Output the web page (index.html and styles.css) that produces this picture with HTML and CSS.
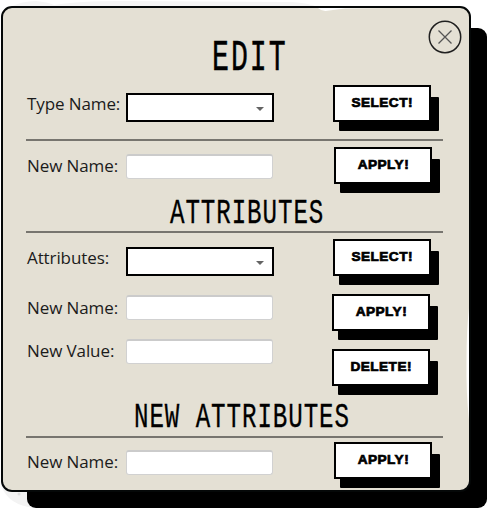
FILE: index.html
```html
<!DOCTYPE html>
<html lang="en">
<head>
<meta charset="utf-8">
<title>Edit</title>
<link rel="stylesheet" href="styles.css">
</head>
<body>
<svg class="smudge" width="489" height="511" viewBox="0 0 489 511" aria-hidden="true">
  <path d="M10 7Q22 1 36 1Q48 2 54 5Q80 1 120 1L292 2Q308 3 318 7Z" fill="#f5f5f5"/>
  <path d="M1 485Q8 506 36 508L36 490Z" fill="#f3f3f3"/>
  <circle cx="19" cy="494" r="1.5" fill="#ddd"/>
</svg>
<main class="panel">
  <svg class="wear" width="469" height="486" viewBox="1 6 469 486" aria-hidden="true">
    <path d="M318 8Q322 12 329 10.500L345 8.500L390 8Z" fill="#fff"/>
    <path d="M469 308Q466.500 330 466.500 360Q466 393 469 420Z" fill="#fff"/>
  </svg>
  <button class="close" aria-label="Close">
    <svg width="34" height="34" viewBox="0 0 34 34"><circle cx="17" cy="17" r="15.700" fill="none" stroke="#202020" stroke-width="1.500"/><path d="M10.500 10.500L23.500 23.500M23.500 10.500L10.500 23.500" stroke="#555" stroke-width="1.300"/></svg>
  </button>
  <h1 class="title"><span>EDIT</span></h1>
  <section class="rows">
    <div class="row type"><label>Type Name:</label><div class="select"></div><button class="action"><span>SELECT!</span></button></div>
    <div class="row rename ruled"><label>New Name:</label><input type="text"><button class="action"><span>APPLY!</span></button></div>
  </section>
  <h2 class="heading"><span>ATTRIBUTES</span></h2>
  <section class="rows">
    <div class="row attribute ruled"><label>Attributes:</label><div class="select"></div><button class="action"><span>SELECT!</span></button></div>
    <div class="row attribute-name"><label>New Name:</label><input type="text"><button class="action"><span>APPLY!</span></button></div>
    <div class="row attribute-value"><label>New Value:</label><input type="text"><button class="action"><span>DELETE!</span></button></div>
  </section>
  <h2 class="heading new-heading"><span>NEW ATTRIBUTES</span></h2>
  <section class="rows">
    <div class="row new-attribute ruled"><label>New Name:</label><input type="text"><button class="action"><span>APPLY!</span></button></div>
  </section>
</main>
</body>
</html>
```
FILE: styles.css
```css
* { box-sizing: border-box; }
body { margin: 0; width: 489px; height: 511px; overflow: hidden; background: #fff; position: relative; z-index: 0; }
.smudge { position: absolute; left: 0; top: 0; z-index: -2; }
.panel {
  position: relative;
  width: 470px; height: 486px;
  margin: 6px 0 0 1px;
  border: 2px solid #050808; border-radius: 11px;
  background: #e4e0d4;
  padding: 0 26px 0 23px;
}
body::before {
  content: ""; position: absolute; z-index: -1;
  left: 27px; top: 28px; width: 460px; height: 480px;
  background: #000; border-radius: 9px;
}
body::after { content: ""; display: table; }
.wear { position: absolute; left: -2px; top: -2px; }
.close { position: absolute; left: 425px; top: 12px; width: 34px; height: 34px; padding: 0; border: 0; background: none; }
.close svg { display: block; }
.title, .heading { margin: 0; display: flex; color: #000; font-family: "Liberation Mono", monospace; font-weight: 400; white-space: pre; }
.title { height: 77px; padding: 28px 0 0 186px; font-size: 44px; line-height: 44px; }
.title span { transform: scaleX(.64); transform-origin: 0 0; height: 44px; letter-spacing: 3.1px; -webkit-text-stroke: .5px #000; }
.heading { height: 38px; padding: 4px 0 0 144px; font-size: 35px; line-height: 35px; }
.heading span { transform: scaleX(.69); transform-origin: 0 0; height: 35px; letter-spacing: 1.35px; -webkit-text-stroke: .3px #000; }
.new-heading { height: 39px; padding-left: 108px; }
.row { display: grid; grid-template-columns: 100px 207px 1fr; align-items: start; }
.ruled { border-top: 2px solid #77756f; }
label { font: 17px/24px "Open Sans", sans-serif; color: #1b1b1b; letter-spacing: -.1px; white-space: nowrap; padding-left: 1px; }
input { width: 147px; height: 25px; padding: 0 5px; border: 1px solid #d1d1d1; border-top: 2px solid #cbcbcb; border-radius: 3px; background: #fff; }
.select { width: 148px; height: 29px; border: 2px solid #000; background: #fff; padding: 12px 8px; display: flex; justify-content: flex-end; }
.select::after { content: ""; border: 4px solid transparent; border-top-color: #646464; border-bottom: 0; height: 4px; }
.action {
  position: relative; z-index: 0;
  width: 98px; height: 37px; padding: 0 0 2px;
  border: 2px solid #000; background: none;
  color: #000; font: 900 13px/16px "Liberation Sans", Arial, sans-serif;
  -webkit-text-stroke: .7px #000;
}
.action span { display: inline-block; letter-spacing: .4px; transform: scaleX(1.05); }
.action::before, .action::after { content: ""; position: absolute; }
.action::before { z-index: -1; inset: 0; background: #fff; }
.action::after { z-index: -2; left: 4px; top: 10px; width: 100px; height: 34px; background: #000; border-radius: 1px; }
.type { height: 54px; }
.type label { margin-top: 7px; }
.type .select { margin-top: 8px; }
.rename { height: 54px; }
.rename label { margin-top: 13px; }
.rename input { margin-top: 13px; }
.rename .action { margin: 6px 0 0 1px; }
.attribute { height: 63px; }
.attribute label { margin-top: 13px; }
.attribute .select { margin-top: 14px; }
.attribute .action { margin-top: 6px; }
.attribute-name { height: 55px; }
.attribute-name label { margin-top: 2px; }
.attribute-name input { margin-top: 1px; }
.attribute-name .action { margin-left: -1px; }
.attribute-value { height: 48px; }
.attribute-value label { margin-top: -10px; }
.attribute-value input { margin-top: -10px; }
.attribute-value .action { margin-left: -1px; }
.new-attribute label { margin-top: 12px; }
.new-attribute input { margin-top: 12px; }
.new-attribute .action { margin: 4px 0 0 1px; }
```
